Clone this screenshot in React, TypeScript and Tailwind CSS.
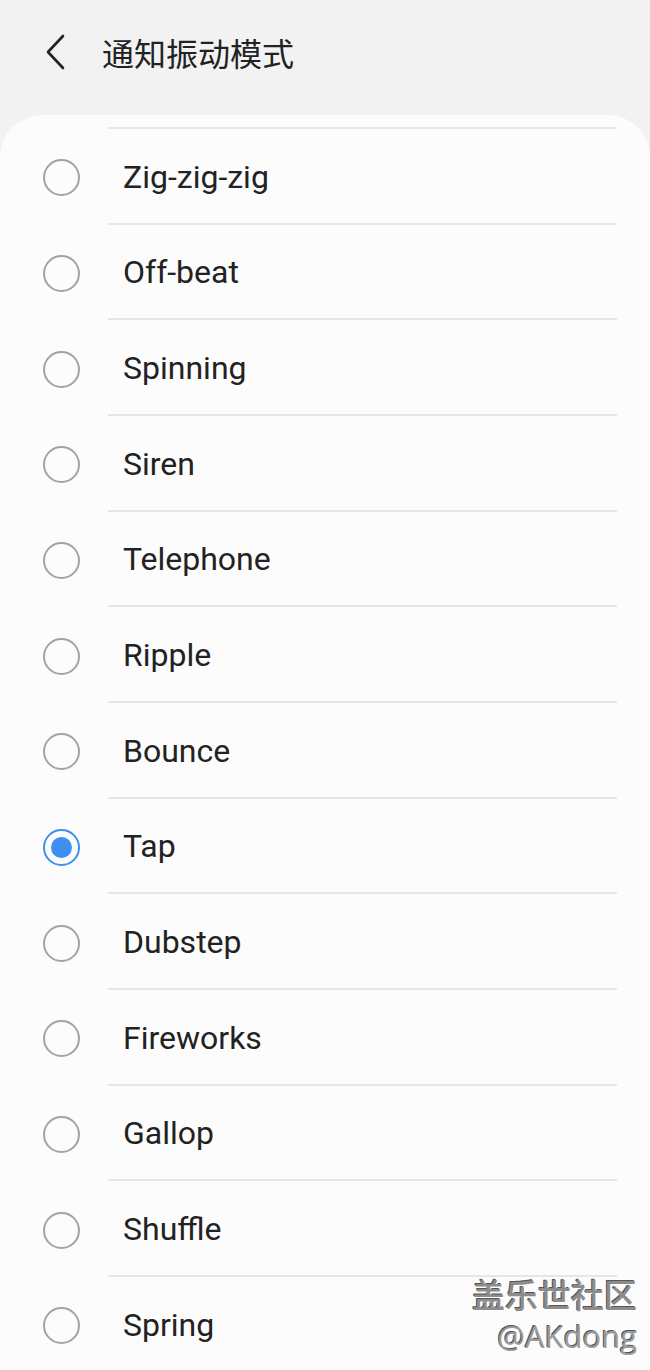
import React from 'react';

const patterns = [
  'Zig-zig-zig',
  'Off-beat',
  'Spinning',
  'Siren',
  'Telephone',
  'Ripple',
  'Bounce',
  'Tap',
  'Dubstep',
  'Fireworks',
  'Gallop',
  'Shuffle',
  'Spring',
];

const Radio: React.FC<{ checked?: boolean }> = ({ checked }) => (
  <div
    className={
      checked
        ? 'flex items-center justify-center w-[37px] h-[37px] rounded-full border-2 border-[#3e8ff0]'
        : 'w-[37px] h-[37px] rounded-full border-2 border-[#a3a3a3]'
    }
  >
    {checked && <div className="w-[21px] h-[21px] rounded-full bg-[#3e8ff0]" />}
  </div>
);

const App: React.FC = () => {
  return (
    <div className="relative w-[650px] h-[1370px] overflow-hidden bg-[#f2f2f2] font-['Roboto','Noto_Sans_CJK_SC',sans-serif]">
      <div className="flex items-center h-[115px] pb-[11px]">
        <svg className="ml-[44px] w-[24px] h-[36px]" viewBox="0 0 24 36" fill="none">
          <path d="M19 2 L4 18 L19 34" stroke="#222" strokeWidth="2.6" strokeLinecap="round" strokeLinejoin="round" />
        </svg>
        <h1 className="ml-[34px] text-[32px] text-[#222] font-['Noto_Sans_CJK_SC',sans-serif]">
          通知振动模式
        </h1>
      </div>

      <div className="rounded-t-[42px] bg-[#fcfcfc] pt-[12px]">
        <div className="ml-[108px] mr-[33px] border-t-2 border-[#e6e6e6]" />
        {patterns.map((name) => (
          <div key={name} className="flex h-[95.67px]">
            <div className="flex items-center justify-center w-[108px] pl-[15px] pt-[2px]">
              <Radio checked={name === 'Tap'} />
            </div>
            <div className="flex flex-1 items-center mr-[33px] pl-[15px] pt-[2px] border-b-2 border-[#e6e6e6] text-[32px] text-[#222]">
              {name}
            </div>
          </div>
        ))}
      </div>

      <div className="absolute right-[13px] bottom-[18px] flex flex-col items-end leading-none text-[#8c8c8c] [text-shadow:1px_1px_0_#fff,-1px_-1px_0_#555]">
        <span className="text-[33px] font-medium font-['Noto_Sans_CJK_SC',sans-serif]">盖乐世社区</span>
        <span className="mt-[10px] text-[31px] font-['Open_Sans',sans-serif] text-[#9a9a9a]">@AKdong</span>
      </div>
    </div>
  );
};

export default App;
